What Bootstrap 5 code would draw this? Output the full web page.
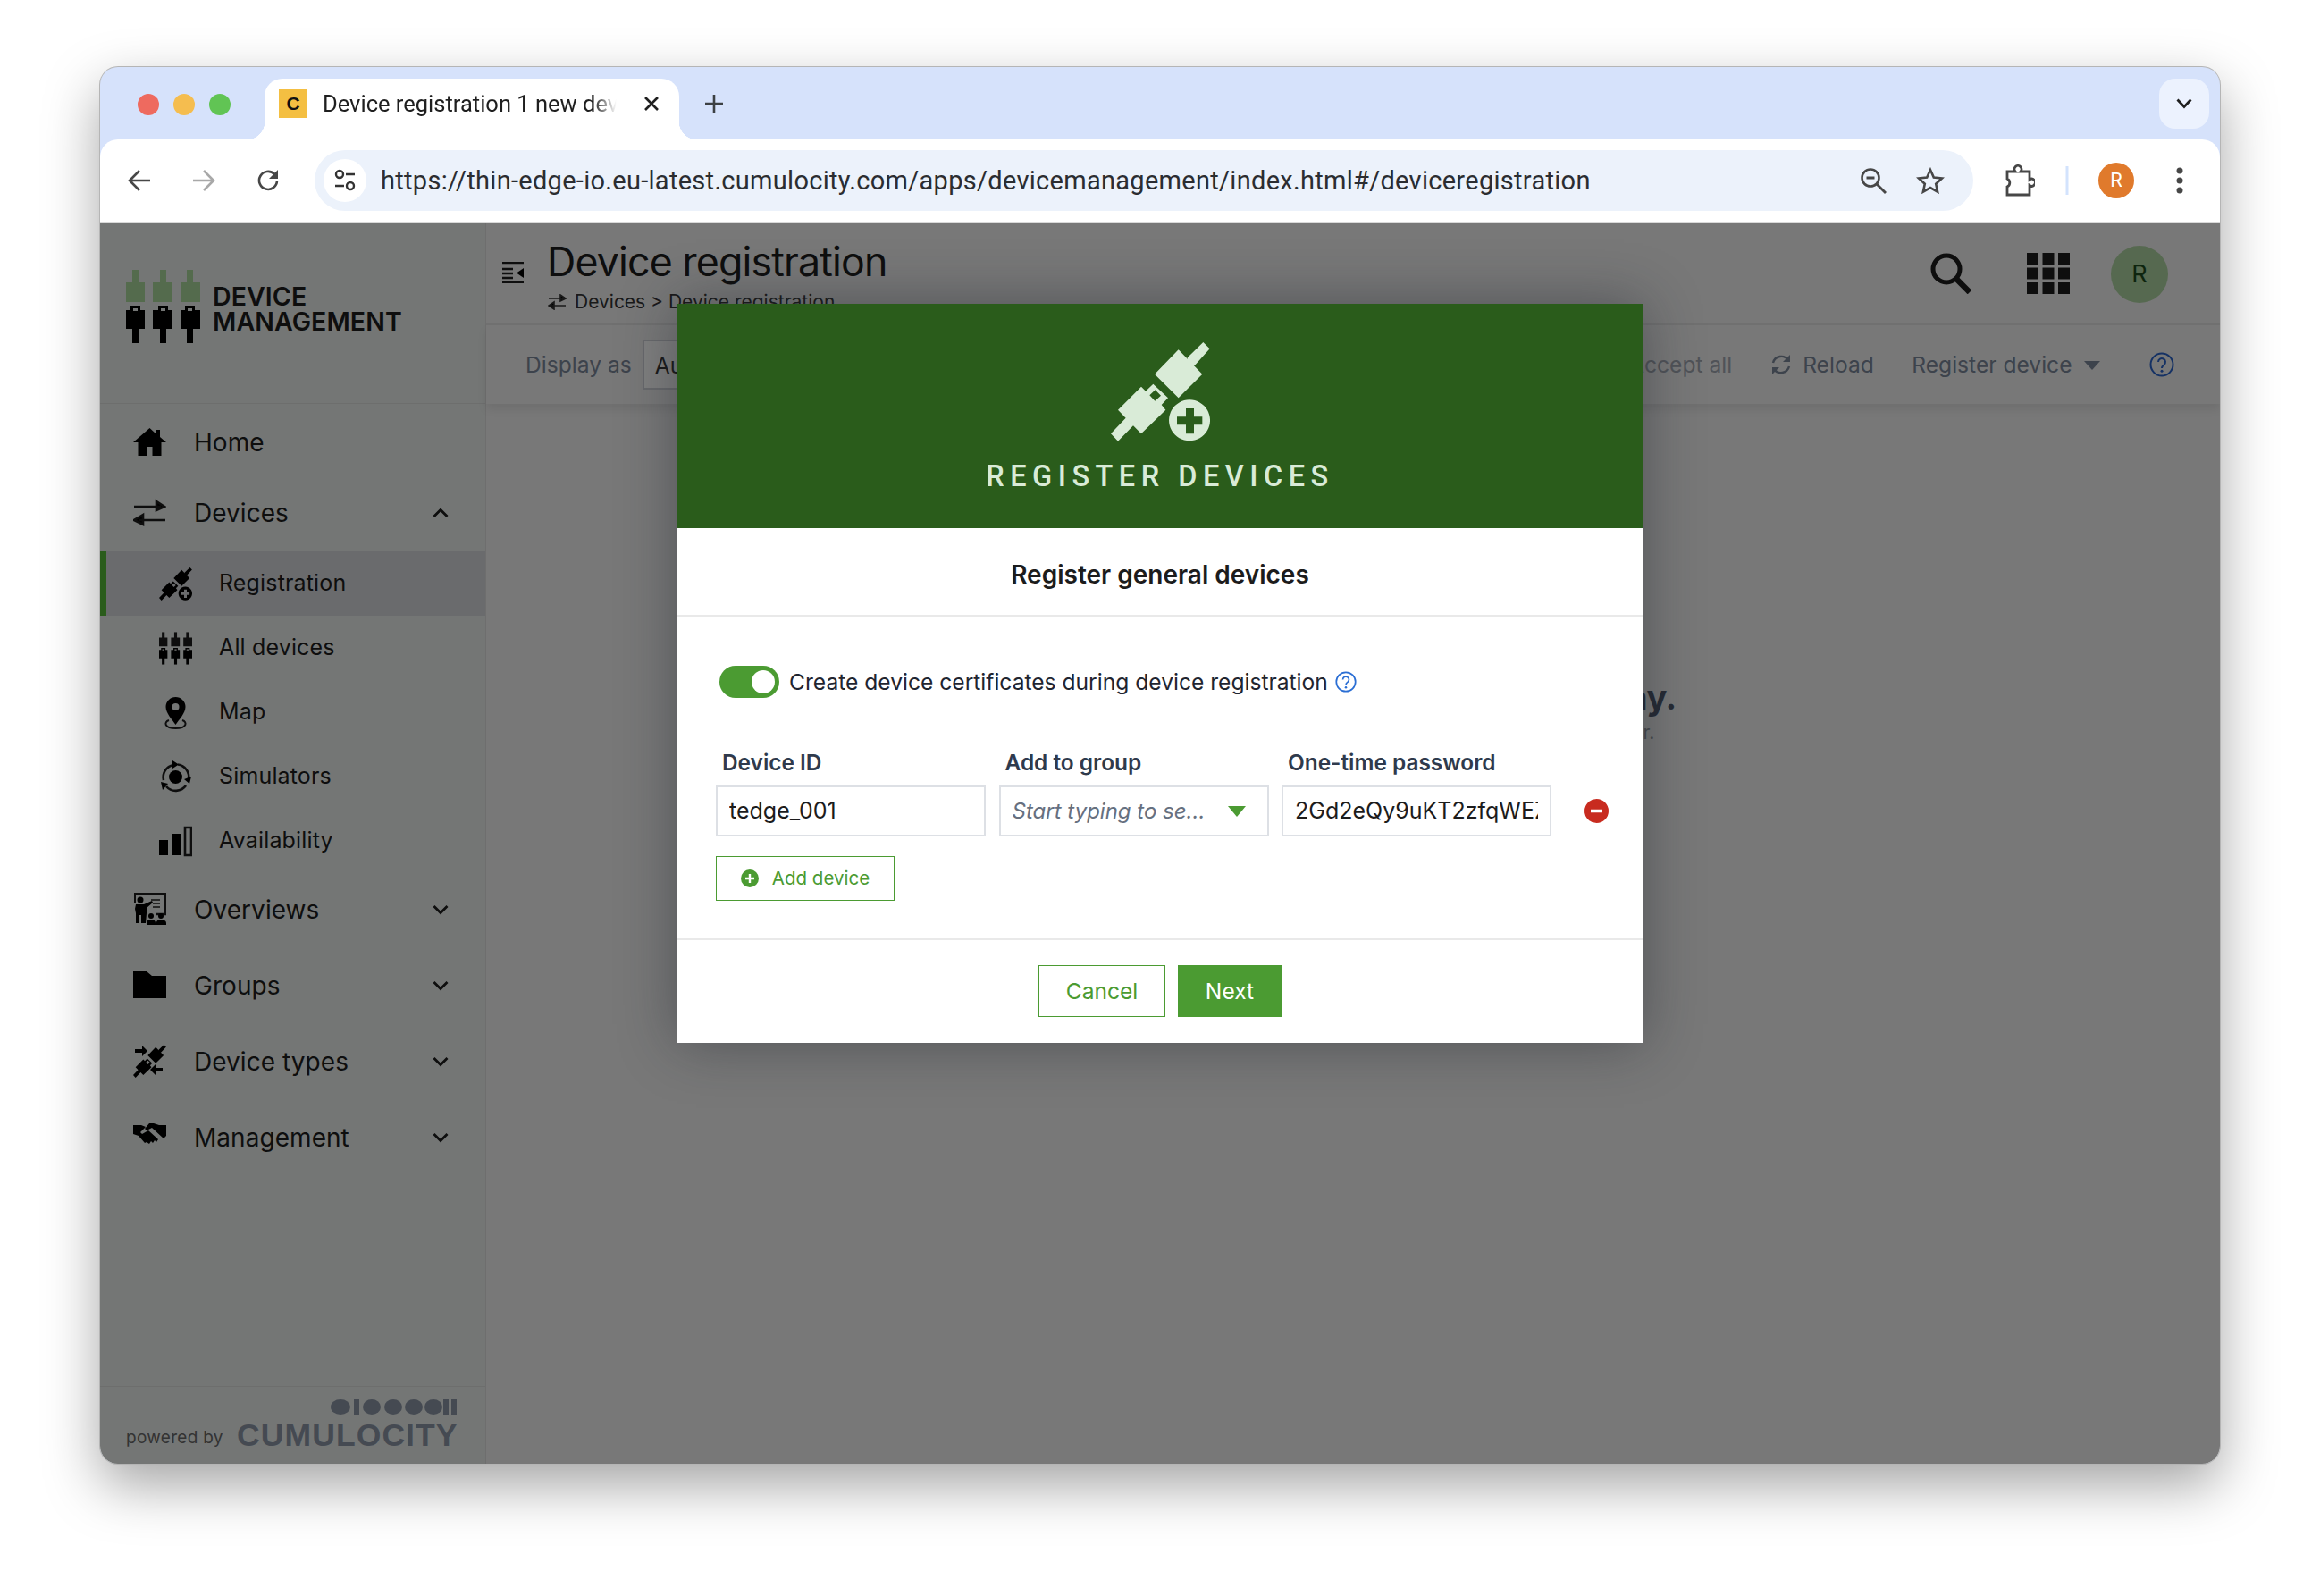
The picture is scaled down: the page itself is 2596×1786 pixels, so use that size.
<!DOCTYPE html>
<html lang="en"><head><meta charset="utf-8"><title>Device registration</title>
<link href="https://cdn.jsdelivr.net/npm/bootstrap@5.3.0/dist/css/bootstrap.min.css" rel="stylesheet">
<style>
html,body{height:100%}
body{background:#fff;padding:75px 112px 0;font-family:Inter,"Liberation Sans",sans-serif;overflow:hidden;color:#1c1c1c}
.win{position:relative;height:1563px;border-radius:20px;overflow:hidden;background:#d6e2fb;box-shadow:0 0 0 1px #b5b5b5,0 24px 62px rgba(0,0,0,.36)}
.strip{height:81px;position:relative;font-family:Roboto,sans-serif}
.dotc{width:24px;height:24px;border-radius:50%;flex:none}
.tabx{position:absolute;left:184px;top:13px;width:464px;height:68px;background:#fff;border-radius:20px 20px 0 0;display:flex;align-items:center;padding:0 18px 12px 16px}
.tabx::before,.tabx::after{content:"";position:absolute;bottom:0;width:20px;height:20px}
.tabx::before{left:-20px;background:radial-gradient(circle at 0 0,transparent 20px,#fff 20.5px)}
.tabx::after{right:-20px;background:radial-gradient(circle at 100% 0,transparent 20px,#fff 20.5px)}
.fav{width:32px;height:32px;background:#f4bf42;font:700 21px/32px "Liberation Sans",sans-serif;text-align:center;color:#111;flex:none}
.tabt{width:332px;margin-left:17px;font-size:25.5px;white-space:nowrap;overflow:hidden;color:#1f1f1f;-webkit-mask-image:linear-gradient(90deg,#000 91%,transparent 99%);mask-image:linear-gradient(90deg,#000 91%,transparent 99%)}
.plusn{position:absolute;left:676px;top:30px}
.listbtn{position:absolute;left:2304px;top:13px;width:56px;height:56px;background:#ecf2fe;border-radius:18px;display:flex;align-items:center;justify-content:center}
.tools{height:94px;background:#fff;border-radius:20px 20px 0 0;border-bottom:2px solid #d9d9d9;padding:12px 0 12px;position:relative;font-family:Roboto,sans-serif}
.urlb{position:absolute;left:240px;top:12px;width:1856px;height:68px;background:#ecf2fb;border-radius:34px;display:flex;align-items:center;font-size:29px;color:#2b2d31;letter-spacing:.01em}
.urlb>span:last-child{padding-top:2px}
.sitec{width:48px;height:48px;margin:0 16px 0 10px;border-radius:50%;background:#fff;display:flex;align-items:center;justify-content:center;flex:none}
.ticon{position:absolute;top:50%;transform:translate(-50%,-50%)}
.avat2{width:40px;height:40px;border-radius:50%;background:#e07a2c;color:#fff;font-size:22px;text-align:center;line-height:40px}
.appw{height:1388px;display:flex;background:#f0f0f0}
.side{width:432px;flex:none;background:#e8ecea;border-right:1px solid #dcdcdc;display:flex;flex-direction:column}
.logoa{height:202px;border-bottom:1px solid #dadcdb;padding:52px 0 0 29px;display:flex;gap:14px;--top:#a9d79a;flex:none}
.logot{font-weight:600;font-size:28.5px;line-height:28px;margin-top:16px;letter-spacing:.1px}
.navi{display:flex;align-items:center;height:85px;font-size:28px;padding-left:37px;position:relative;color:#1c1c1c;letter-spacing:.05px}
.navi svg.mi{width:37px;height:37px;margin-right:31px;flex:none}
.navi .chv{position:absolute;left:372px;top:50%;transform:translateY(-50%)}
.navs{display:flex;align-items:center;height:72px;font-size:25px;padding-left:66px;letter-spacing:.15px}
.navs svg{width:37px;height:37px;margin-right:30px;flex:none}
.navs.cur{background:#d4d6da;box-shadow:inset 7px 0 0 #54b836}
.navi.devrow{height:80px;padding-bottom:6px}
.navi.devrow .chv{margin-top:-3px}
.navi.ovr{margin-top:-2px}
.sfoot{margin-top:auto;height:87px;border-top:1px solid #dadcdb;position:relative}
.pwr{position:absolute;left:29px;top:43px;font-size:19px;color:#666;letter-spacing:.3px}
.cum{position:absolute;left:153px;top:32px;font:700 35.5px/44px "Liberation Sans",sans-serif;color:#8a94a4;letter-spacing:1.1px}
.maina{flex:1;min-width:0;display:flex;flex-direction:column;background:#f0f0f0}
.headr{height:114px;flex:none;border-bottom:2px solid #e0e0e0;display:flex;position:relative;padding-left:18px}
.pgt{font-size:44.7px;line-height:56px;margin:15px 0 0 -1px;letter-spacing:-.85px;color:#1c1c1c;white-space:nowrap}
.crumb{font-size:21px;line-height:28px;display:flex;align-items:center;gap:9px;color:#333;margin-top:3px}
.actb{height:88px;flex:none;display:flex;align-items:center;padding-left:44px;font-size:24.6px;color:#7a8699;box-shadow:0 6px 10px rgba(0,0,0,.08);background:#f0f0f0}
.selx{width:300px;height:56px;border:2px solid #d0d3d8;margin-left:12px;padding:9px 12px;color:#333;background:#fff}
.emptyt{text-align:center;margin-top:304px;font-weight:700;font-size:38px;line-height:48px;color:#4a5568;white-space:nowrap;letter-spacing:-.3px}
.emptyu{text-align:center;font-size:21px;color:#8f949c}
.ovl{position:absolute;left:0;right:0;top:175px;bottom:0;background:rgba(0,0,0,.5);display:flex;justify-content:center;padding-top:90px}
.mdl.modal-content{width:1080px;height:827px;border:0;border-radius:0;box-shadow:0 0 60px rgba(30,35,45,.45);color:#1c1c1c;display:block;background:#fff}
.mhead{height:251px;background:#2a5c1b;color:#d9ebd7;text-align:center;padding-top:43px}
.mhead svg{display:block;margin:0 auto}
.mhead h1{font:500 32.5px/40px Roboto,sans-serif;letter-spacing:.2em;margin:19px 0 0}
.mtitle.modal-title{height:99px;border-bottom:2px solid #e9e9e9;font-size:28px;font-weight:600;display:flex;align-items:center;justify-content:center;padding-top:6px}
.mbodyx{height:362px;padding:55px 47px 0;border-bottom:2px solid #e9e9e9;position:relative}
.sw.form-check-input{width:67px;height:36px;margin:0;border:0;border-radius:18px;background-color:#4b9b32;float:none;background-position:right 5px center;background-size:auto 26px;background-repeat:no-repeat;background-image:url("data:image/svg+xml,%3csvg xmlns='http://www.w3.org/2000/svg' viewBox='0 0 26 26'%3e%3ccircle cx='13' cy='13' r='13' fill='white'/%3e%3c/svg%3e");opacity:1}
.swl{font-size:24.6px;margin-left:11px;color:#1f2530}
.rowf{display:flex;gap:14.5px;margin-top:56px}
.colf{width:302px;flex:none}
.colf label{font-size:24.4px;font-weight:600;color:#2f3a4c;margin:0 0 11px 7px;line-height:30px;display:block}
.inpx.form-control{height:57px;border:2px solid #dde0e5;border-radius:0;font-size:25px;padding:0 13px;color:#1c1c1c;box-shadow:none}
.inpx.form-control::placeholder{font-style:italic;color:#66707f;font-size:24px}
.caretb{position:absolute;right:26px;top:23px;width:0;height:0;border:10px solid transparent;border-top:12px solid #4b9b32;border-bottom:0}
.addb.btn{width:200px;height:50px;margin-top:22px;border:1.5px solid #4b9b32;border-radius:0;color:#4b9b32;background:#fff;font-size:20.5px;padding:0;display:flex;align-items:center;justify-content:center;gap:15px}
.minusb{position:absolute;left:1015px;top:204px}
.mfootx{padding-top:28px;display:flex;justify-content:center;gap:14px}
.cbtn.btn{height:58px;border-radius:0;font-size:24.6px;padding:0;border:1.5px solid #4b9b32}
.bcan.btn{width:142px;color:#4b9b32;background:#fff}
.bnxt.btn{width:116px;color:#fff;background:#4b9b32}
</style></head><body>
<svg width="0" height="0" class="d-block position-absolute"><defs>
<symbol id="plugpair" viewBox="428 128 333 333">
<path d="M655 153 735 235 655 315 575 235ZM685 180 738 128 760 150 710 205 690 200Z"/>
<path fill-rule="evenodd" d="M452 355 530 277 545 292 570 268 620 315 598 338 612 355 530 435 503 408 452 460 428 435 478 382ZM577 288 558 306 576 325 596 307Z"/>
</symbol>
<symbol id="plugadd" viewBox="428 128 333 333">
<use href="#plugpair" x="428" y="128" width="333" height="333"/>
<path fill-rule="evenodd" d="M692 321a69 69 0 1 0 .1 0ZM680 350h27v28h28v27h-28v30h-27v-30h-30v-27h30Z"/>
</symbol>
<symbol id="plugs" viewBox="0 0 83 82">
<g style="fill:var(--top,currentColor)"><path d="M7 0h7v14h7v22H0V14h7ZM38 0h7v14h7v22H30V14h8ZM68 0h7v14h8v22H61V14h7Z"/></g>
<path fill-rule="evenodd" d="M5 40h11v5h5v21h-7v16H7V66H0V45h5ZM8 43v3h5v-3ZM36 40h11v5h5v21h-7v16h-7V66h-8V45h6ZM39 43v3h5v-3ZM66 40h11v5h6v21h-8v16h-7V66h-7V45h5ZM69 43v3h5v-3Z"/>
</symbol>
<symbol id="qmark" viewBox="0 0 28 28">
<circle cx="14" cy="14" r="12.5" fill="none" stroke="currentColor" stroke-width="2"/>
<path d="M10 11a4 4 0 1 1 6.5 3.2c-1.7 1.2-2.5 2-2.5 3.8" fill="none" stroke="currentColor" stroke-width="2"/><circle cx="14" cy="21.3" r="1.5" fill="currentColor"/>
</symbol>
</defs></svg>
<div class="win">
 <div class="strip">
  <div class="d-flex gap-3 position-absolute" style="left:42px;top:30px"><span class="dotc" style="background:#ee6a5f"></span><span class="dotc" style="background:#f5bd4f"></span><span class="dotc" style="background:#61c454"></span></div>
  <div class="tabx"><span class="fav">C</span><span class="tabt">Device registration 1 new device</span>
   <svg class="ms-auto me-1" width="18" height="18" viewBox="0 0 18 18"><path d="M2 2 16 16M16 2 2 16" stroke="#1f1f1f" stroke-width="2.6"/></svg></div>
  <svg class="plusn" width="22" height="22" viewBox="0 0 22 22"><path d="M11 1v20M1 11h20" stroke="#3c4043" stroke-width="2.6"/></svg>
  <div class="listbtn"><svg width="18" height="12" viewBox="0 0 18 12"><path d="M1.5 1.5 9 9.5l7.5-8" fill="none" stroke="#1f1f1f" stroke-width="2.8"/></svg></div>
 </div>
 <div class="tools">
  <svg class="ticon" style="left:44px" width="26" height="26" viewBox="0 0 26 26"><path d="M25 13H3M13 2 2 13l11 11" fill="none" stroke="#474747" stroke-width="2.6"/></svg>
  <svg class="ticon" style="left:116px" width="26" height="26" viewBox="0 0 26 26"><path d="M1 13h22M13 2l11 11-11 11" fill="none" stroke="#a8a8a8" stroke-width="2.6"/></svg>
  <svg class="ticon" style="left:188px" width="28" height="28" viewBox="0 0 28 28"><path d="M24 14a10 10 0 1 1-3-7.2L24 10" fill="none" stroke="#474747" stroke-width="2.6"/><path d="M25 2v10H15Z" fill="#474747"/></svg>
  <div class="urlb"><span class="sitec"><svg width="24" height="26" viewBox="0 0 24 26"><circle cx="6" cy="6" r="4" fill="none" stroke="#333" stroke-width="2.4"/><path d="M13 6h10M1 19h10" stroke="#333" stroke-width="2.6"/><circle cx="18" cy="19" r="4" fill="none" stroke="#333" stroke-width="2.4"/></svg></span><span>https://thin-edge-io.eu-latest.cumulocity.com/apps/devicemanagement/index.html#/deviceregistration</span></div>
  <svg class="ticon" style="left:1984px" width="30" height="30" viewBox="0 0 30 30"><circle cx="12" cy="12" r="9.5" fill="none" stroke="#474747" stroke-width="2.6"/><path d="M7.500 12h9" stroke="#474747" stroke-width="3"/><path d="m19 19 10 10" stroke="#474747" stroke-width="2.8"/></svg>
  <svg class="ticon" style="left:2048px" width="32" height="30" viewBox="0 0 32 30"><path d="m16 3 3.800 8.500 9.200 1-6.800 6.200 1.900 9L16 23.100 7.900 27.700l1.900-9L3 12.500l9.200-1Z" fill="none" stroke="#474747" stroke-width="2.600"/></svg>
  <svg class="ticon" style="left:2148px" width="34" height="36" viewBox="0 0 34 36"><path d="M3 8h9a4 4 0 1 1 6 0h10v9a4 4 0 1 1 0 6.500V34H3v-9a5 5 0 0 0 0-9Z" fill="none" stroke="#474747" stroke-width="2.800"/></svg>
  <span class="ticon" style="left:2201px;width:3px;height:32px;background:#d3e3fd"></span>
  <span class="ticon avat2" style="left:2256px">R</span>
  <svg class="ticon" style="left:2327px" width="8" height="30" viewBox="0 0 8 30"><circle cx="4" cy="4" r="3.500" fill="#474747"/><circle cx="4" cy="15" r="3.500" fill="#474747"/><circle cx="4" cy="26" r="3.500" fill="#474747"/></svg>
 </div>
 <div class="appw">
  <aside class="side">
   <div class="logoa"><svg width="83" height="82"><use href="#plugs"/></svg><div class="logot">DEVICE<br>MANAGEMENT</div></div>
   <div class="navi"><svg class="mi" viewBox="0 0 37 37"><path d="M18.500 3 0 19h5.500v15h10V24h6v10h10V19H37L30 13V5h-5v4Z"/></svg>Home</div>
   <div class="navi devrow"><svg class="mi" viewBox="0 0 37 37"><path d="M1 11h30M26 5l9 6-9 4ZM36 26H6M11 20l-10 6 10 5Z" stroke="#1c1c1c" stroke-width="2.600"/></svg>Devices<svg class="chv" width="18" height="12" viewBox="0 0 18 12"><path d="m1.500 10 7.500-7.500 7.500 7.500" fill="none" stroke="#1c1c1c" stroke-width="2.800"/></svg></div>
   <div class="navs cur"><svg viewBox="0 0 37 37"><use href="#plugadd"/></svg>Registration</div>
   <div class="navs"><svg viewBox="0 0 83 82"><use href="#plugs"/></svg>All devices</div>
   <div class="navs"><svg viewBox="0 0 37 37"><path fill-rule="evenodd" d="M18.500 1a11 11 0 0 0-11 11c0 7 7 14 11 20 4-6 11-13 11-20a11 11 0 0 0-11-11Zm0 7a4 4 0 1 1 0 8 4 4 0 0 1 0-8Z"/><path d="M11 27c-6 2-5 9 7.500 9s13.500-7 7.500-9" fill="none" stroke="#1c1c1c" stroke-width="2"/></svg>Map</div>
   <div class="navs"><svg viewBox="0 0 37 37"><circle cx="18.500" cy="18.500" r="7.500"/><path d="M5 22A14 14 0 0 1 16 5M21 4.500A14 14 0 0 1 33 21M30 28A14 14 0 0 1 8 29" fill="none" stroke="#1c1c1c" stroke-width="2.600"/><path d="m15 0 7 4.500-7 4.500ZM36 18l-2 8-6-5ZM4 33l-2-9 8 2Z"/></svg>Simulators</div>
   <div class="navs"><svg viewBox="0 0 37 37"><path d="M0 17h10v17H0ZM14 10h10v24H14Z"/><path d="M29 3h7v31h-7Z" fill="none" stroke="#1c1c1c" stroke-width="2.600"/></svg>Availability</div>
   <div class="navi ovr"><svg class="mi" viewBox="0 0 37 37"><path d="M1 1h35v23H26" fill="none" stroke="#1c1c1c" stroke-width="2.400"/><path d="M2 3v8" stroke="#1c1c1c" stroke-width="2"/><circle cx="8" cy="8" r="3.500"/><path d="M3 13h9l9-4 1 2-7 6v6l-1 11H9v-9H7v9H3V23L2 18Z"/><path d="M20 8h10M22 12h8M22 16h8" stroke="#1c1c1c" stroke-width="1.600"/><circle cx="20" cy="26" r="3"/><circle cx="31" cy="26" r="3"/><path d="M15 36v-2c0-3 2-4 5-4s5 1 5 4v2ZM26 36v-2c0-3 2-4 5-4s6 1 6 4v2Z"/></svg>Overviews<svg class="chv" width="18" height="12" viewBox="0 0 18 12"><path d="m1.500 2 7.500 7.500 7.500-7.500" fill="none" stroke="#1c1c1c" stroke-width="2.800"/></svg></div>
   <div class="navi"><svg class="mi" viewBox="0 0 37 37"><path d="M0 3h15l6 5h16v25H0Z"/></svg>Groups<svg class="chv" width="18" height="12" viewBox="0 0 18 12"><path d="m1.500 2 7.500 7.500 7.500-7.500" fill="none" stroke="#1c1c1c" stroke-width="2.800"/></svg></div>
   <div class="navi"><svg class="mi" viewBox="0 0 37 37"><use href="#plugpair"/><path d="M2 5h8V1l6 6-6 6V9H2ZM33 26h-8v-4l-6 6 6 6v-4h8Z"/></svg>Device types<svg class="chv" width="18" height="12" viewBox="0 0 18 12"><path d="m1.500 2 7.500 7.500 7.500-7.500" fill="none" stroke="#1c1c1c" stroke-width="2.800"/></svg></div>
   <div class="navi"><svg class="mi" viewBox="0 0 37 37"><path d="M0 5h9l5 2-6 6 2 2 7-4 11 10-2 3-2-2-2 3-2-2-2 3-3-2-2 1-7-8-6-2Z"/><path d="M37 5h-8l-6-2h-5l-5 6 2 2 6-3 13 12 5-5Z"/></svg>Management<svg class="chv" width="18" height="12" viewBox="0 0 18 12"><path d="m1.500 2 7.500 7.500 7.500-7.500" fill="none" stroke="#1c1c1c" stroke-width="2.800"/></svg></div>
   <div class="sfoot"><svg class="position-absolute" style="left:258px;top:14px" width="141" height="17" viewBox="0 0 141 17" fill="#8a94a4"><ellipse cx="11" cy="8.500" rx="11" ry="8.500"/><rect x="26" y="0" width="6" height="17"/><ellipse cx="46" cy="8.500" rx="10" ry="8.500"/><ellipse cx="70" cy="8.500" rx="10" ry="8.500"/><ellipse cx="93" cy="8.500" rx="10" ry="8.500"/><ellipse cx="115" cy="8.500" rx="10" ry="8.500"/><rect x="126" y="0" width="6" height="17"/><rect x="135" y="0" width="6" height="17"/></svg><span class="pwr">powered by</span><span class="cum">CUMULOCITY</span></div>
  </aside>
  <main class="maina">
   <div class="headr">
    <svg style="margin:43px 27px 0 0;flex:none" width="24" height="24" viewBox="0 0 24 24"><path d="M0 1h24M0 8h12M0 13h12M0 18h12M0 23h24" stroke="#1c1c1c" stroke-width="2.400"/><path d="M24 7v11l-8-5.500Z"/></svg>
    <div><div class="pgt">Device registration</div>
    <div class="crumb"><svg width="21" height="18" viewBox="0 0 21 18"><path d="M1 5h17M14 1l6 4-6 3ZM20 13H3M7 9l-6 4 6 4Z" stroke="#333" stroke-width="1.600"/></svg>Devices &gt; Device registration</div></div>
    <svg class="position-absolute" style="left:1616px;top:33px" width="46" height="46" viewBox="0 0 46 46"><circle cx="18" cy="18" r="15" fill="none" stroke="#1c1c1c" stroke-width="5"/><path d="m29 29 15 15" stroke="#1c1c1c" stroke-width="6.500"/></svg>
    <svg class="position-absolute" style="left:1724px;top:33px" width="48" height="46" viewBox="0 0 48 46" fill="#1c1c1c"><path d="M0 0h13v13H0ZM17.500 0h13v13h-13ZM35 0h13v13H35ZM0 16.500h13v13H0ZM17.500 16.500h13v13h-13ZM35 16.500h13v13H35ZM0 33h13v13H0ZM17.500 33h13v13h-13ZM35 33h13v13H35Z"/></svg>
    <span class="position-absolute rounded-circle text-center" style="left:1818px;top:25px;width:64px;height:64px;background:#acd2a0;color:#1d4a1d;font-size:27px;line-height:64px">R</span>
   </div>
   <div class="actb"><span>Display as</span><div class="selx">Auto</div>
    <div class="ms-auto d-flex align-items-center">
     <span style="color:#a0a6b0;margin-right:43px">Accept all</span>
     <svg style="margin-right:12px" width="24" height="26" viewBox="0 0 24 26"><path d="M3 11A9.500 9.500 0 0 1 20 8M21 15A9.500 9.500 0 0 1 4 18" fill="none" stroke="#7a8699" stroke-width="2.400"/><path d="M22 2v8h-8ZM2 24v-8h8Z" fill="#7a8699"/></svg>
     <span style="margin-right:42.5px">Reload</span><span>Register device</span>
     <span class="d-inline-block" style="margin:3px 55px 0 13.5px;border:9px solid transparent;border-top:10px solid #7a8699;border-bottom:0"></span>
     <svg style="margin-right:51px;color:#2a63c8" width="28" height="28"><use href="#qmark"/></svg>
    </div></div>
   <div class="emptyt">No new registration requests to display.</div>
   <div class="emptyu">Click the button above to register a new device for current end user.</div>
  </main>
 </div>
 <div class="ovl">
  <div class="mdl modal-content" role="dialog">
   <div class="mhead"><svg width="111" height="111" fill="#d9ebd7"><use href="#plugadd"/></svg><h1>REGISTER DEVICES</h1></div>
   <div class="mtitle modal-title">Register general devices</div>
   <div class="mbodyx">
    <div class="d-flex align-items-center"><input class="form-check-input sw" type="checkbox" checked aria-label="Create device certificates"><span class="swl">Create device certificates during device registration</span><svg class="ms-2" style="color:#2a6ed4" width="24" height="24" viewBox="0 0 28 28"><use href="#qmark"/></svg></div>
    <div class="rowf" style="margin-left:-4px">
     <div class="colf"><label for="f1">Device ID</label><input id="f1" class="form-control inpx" value="tedge_001"></div>
     <div class="colf position-relative"><label for="f2">Add to group</label><div class="position-relative"><input id="f2" class="form-control inpx" placeholder="Start typing to se..."><span class="caretb"></span></div></div>
     <div class="colf"><label for="f3">One-time password</label><input id="f3" class="form-control inpx" value="2Gd2eQy9uKT2zfqWEZpL7"></div>
    </div>
    <svg class="minusb" width="27" height="27" viewBox="0 0 27 27"><circle cx="13.500" cy="13.500" r="13.500" fill="#c82b1f"/><path d="M7 13.500h13" stroke="#fff" stroke-width="3.500"/></svg>
    <button class="btn addb" style="margin-left:-4px" type="button"><svg width="20" height="20" viewBox="0 0 20 20"><circle cx="10" cy="10" r="10" fill="#4b9b32"/><path d="M10 5v10M5 10h10" stroke="#fff" stroke-width="2.400"/></svg>Add device</button>
   </div>
   <div class="mfootx"><button class="btn cbtn bcan" type="button">Cancel</button><button class="btn cbtn bnxt" type="button">Next</button></div>
  </div>
 </div>
</div>
<script src="https://cdn.jsdelivr.net/npm/bootstrap@5.3.0/dist/js/bootstrap.bundle.min.js"></script>
</body></html>
